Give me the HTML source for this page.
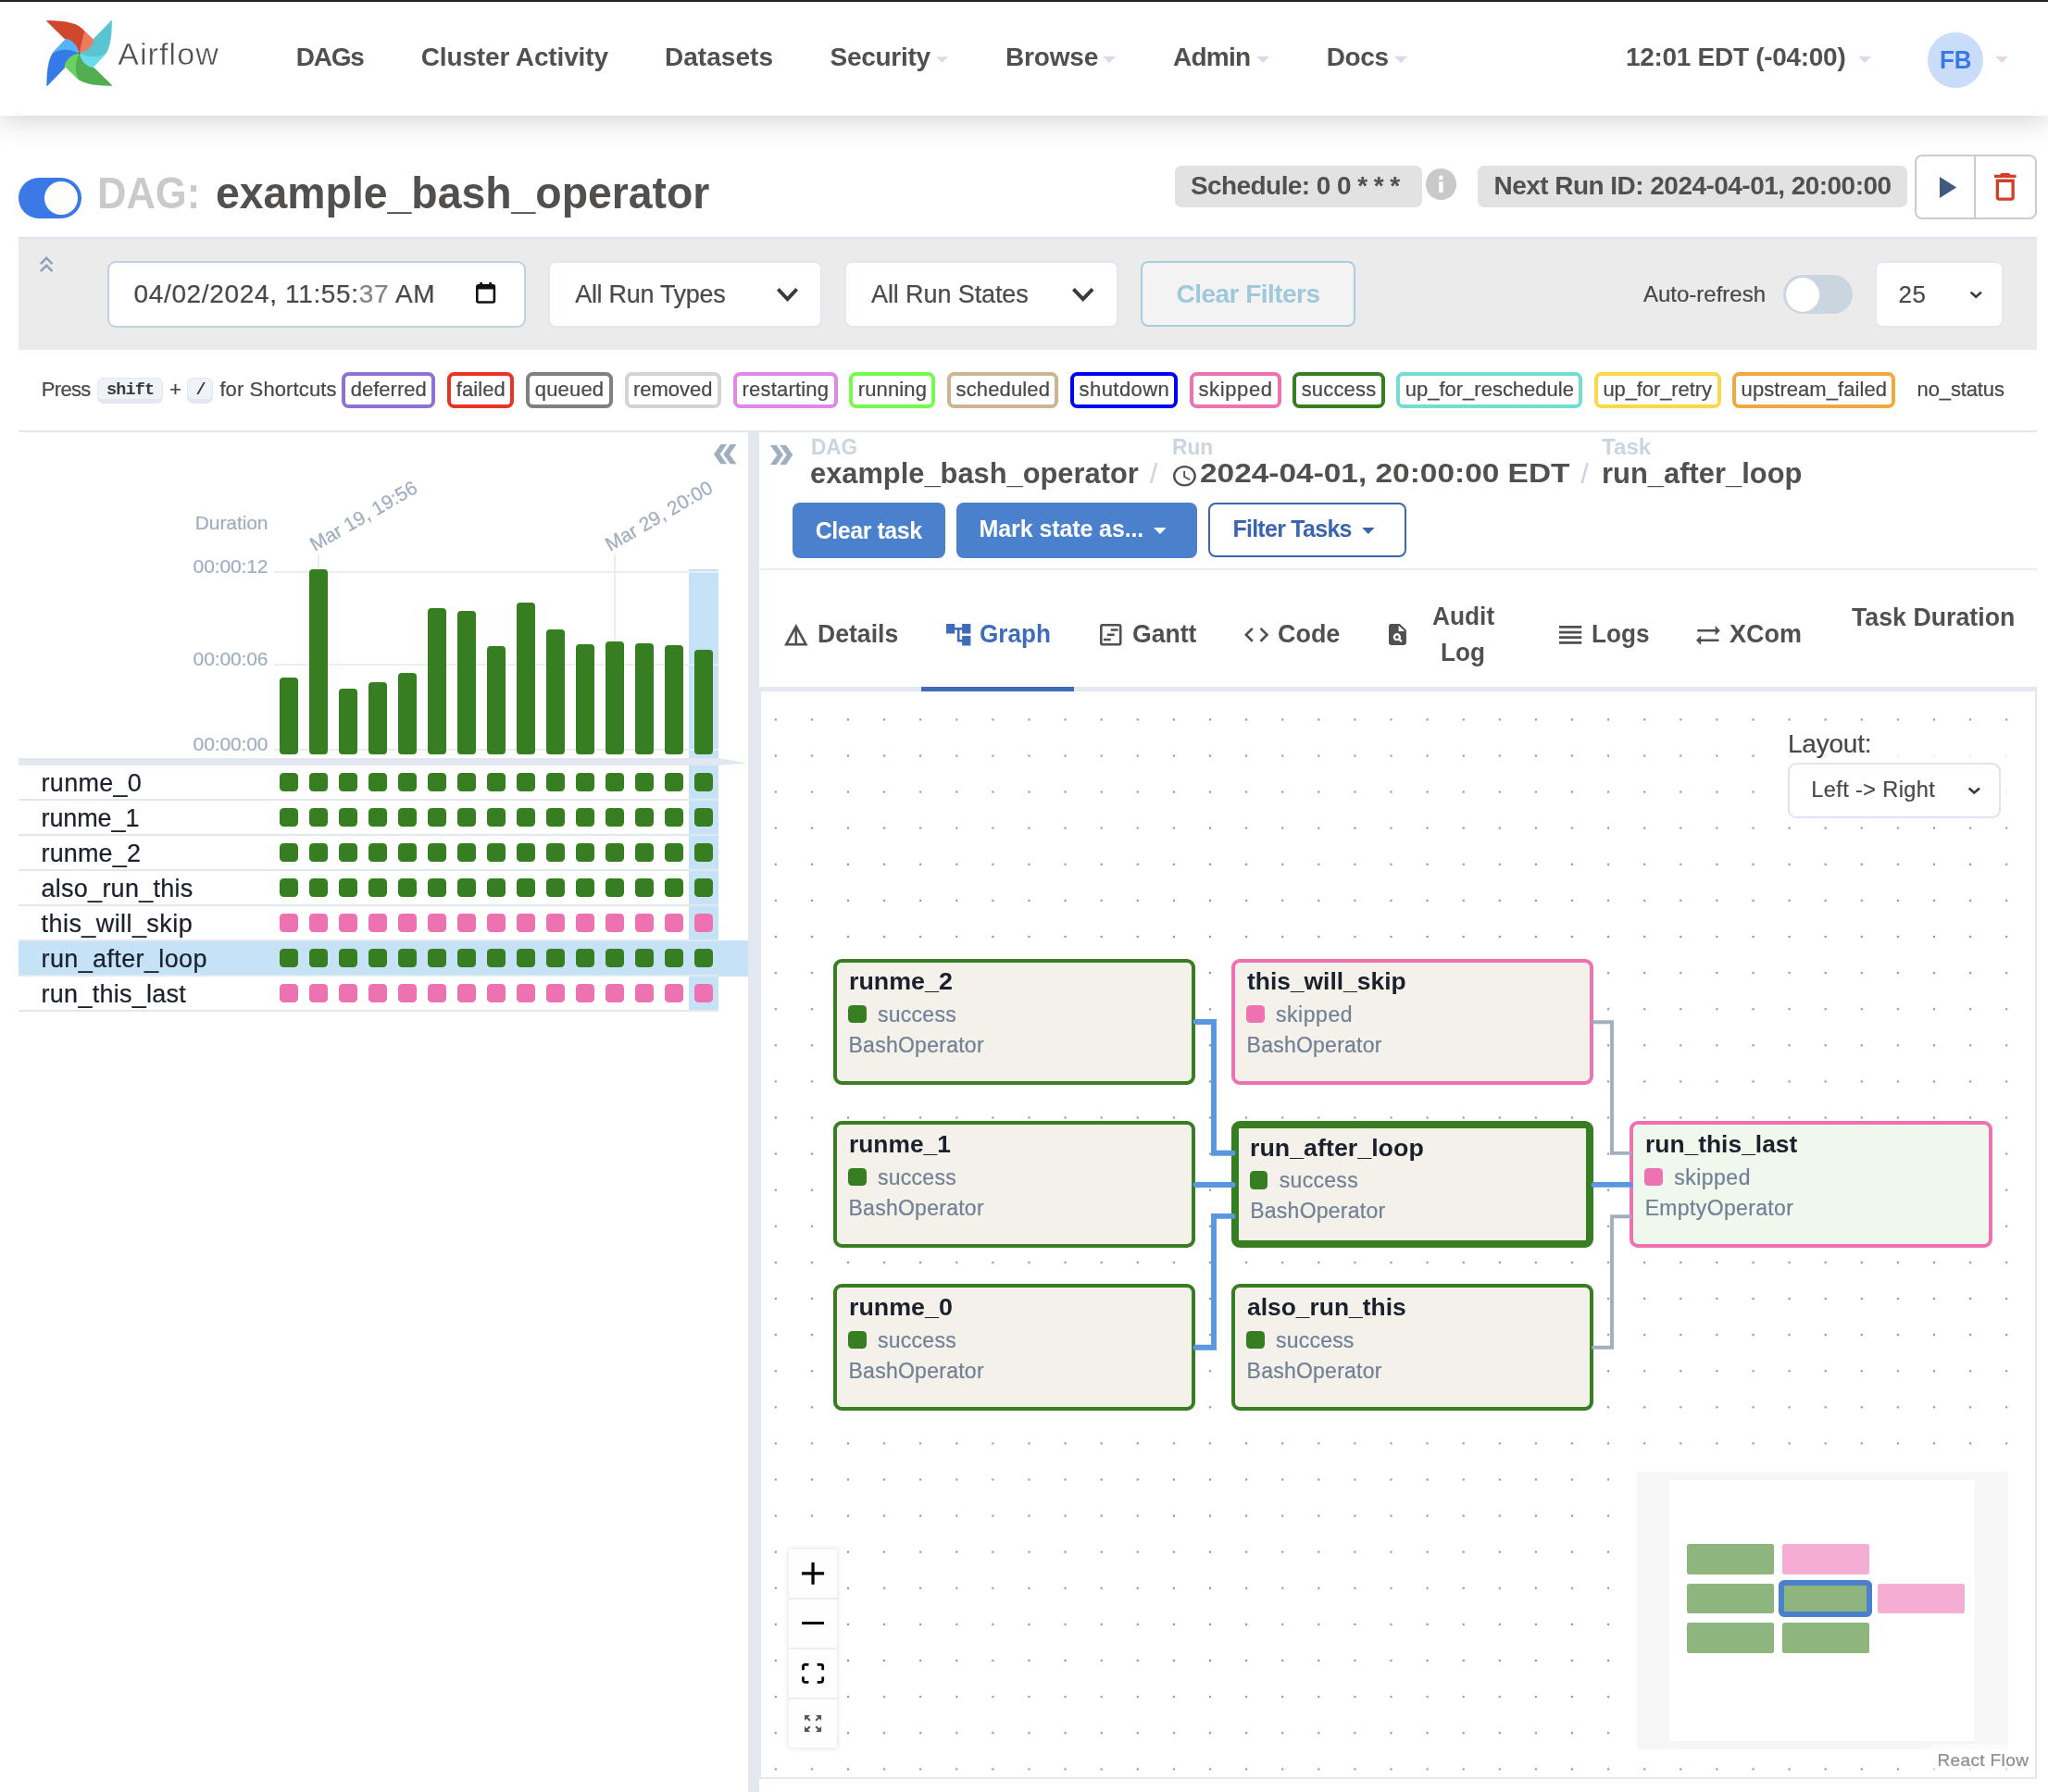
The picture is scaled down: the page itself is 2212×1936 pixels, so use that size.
<!DOCTYPE html>
<html lang="en"><head><meta charset="utf-8"><title>Airflow - example_bash_operator</title>
<style>
*{box-sizing:border-box;margin:0;padding:0}
html,body{width:2212px;height:1936px;overflow:hidden;background:#fff}
body{position:relative;font-family:"Liberation Sans",sans-serif}
#root{position:absolute;left:0;top:0;width:2212px;height:1936px;will-change:transform}
.t{position:absolute;white-space:pre;display:block}
.r{-webkit-text-stroke:0.22px currentColor}
.a{position:absolute;display:block}
svg{position:absolute;display:block;overflow:visible}

.sq{width:470px;height:20px}
.sq i{position:absolute;top:0;width:20px;height:20px;border-radius:4.5px;background:currentColor}
</style></head>
<body>
<div id="root">
<div class="a" style="left:0px;top:2px;width:2212.00px;height:122.50px;background:#fff;box-shadow:0 2px 32px rgba(0,0,0,.21)"></div>
<div class="a" style="left:0px;top:0px;width:2212.00px;height:2.20px;background:#20242b"></div>
<svg style="left:50px;top:22px" width="71.3" height="71" viewBox="0 0 130.2 130.2"><defs><clipPath id="bl"><path d="M1.76,129.58 A0.67,0.67 0 0 1 0.6,129.05 C0.95,103.62 2.85,73.65 16.13,60.05 L39.21,36.39 A1.06,1.06 0 0 1 39.84,36.07 C52,38 63,52 65.1,65.1 C52,67.2 38,78.2 36.5,90.7 L36.5,94 Z"/></clipPath></defs><g transform="rotate(0 65.1 65.1)"><path d="M1.76,129.58 A0.67,0.67 0 0 1 0.6,129.05 C0.95,103.62 2.85,73.65 16.13,60.05 L39.21,36.39 A1.06,1.06 0 0 1 39.84,36.07 C52,38 63,52 65.1,65.1 C52,67.2 38,78.2 36.5,90.7 L36.5,94 Z" fill="#367ae7" stroke="#367ae7" stroke-width="0.5"/><path d="M65.1,65.1 C48,57 28,54 11.5,66.1 L-2,50 L39.5,28 L72,30 Z" fill="#55b4fa" clip-path="url(#bl)"/></g><g transform="rotate(90 65.1 65.1)"><path d="M1.76,129.58 A0.67,0.67 0 0 1 0.6,129.05 C0.95,103.62 2.85,73.65 16.13,60.05 L39.21,36.39 A1.06,1.06 0 0 1 39.84,36.07 C52,38 63,52 65.1,65.1 C52,67.2 38,78.2 36.5,90.7 L36.5,94 Z" fill="#cf472d" stroke="#cf472d" stroke-width="0.5"/><path d="M65.1,65.1 C56,62 38,60 21.5,54.5 L10,42 L39.5,28 L72,30 Z" fill="#ed7c5e" clip-path="url(#bl)"/></g><g transform="rotate(180 65.1 65.1)"><path d="M1.76,129.58 A0.67,0.67 0 0 1 0.6,129.05 C0.95,103.62 2.85,73.65 16.13,60.05 L39.21,36.39 A1.06,1.06 0 0 1 39.84,36.07 C52,38 63,52 65.1,65.1 C52,67.2 38,78.2 36.5,90.7 L36.5,94 Z" fill="#5bc4d1" stroke="#5bc4d1" stroke-width="0.5"/><path d="M65.1,65.1 C48,57 28,54 11.5,66.1 L-2,50 L39.5,28 L72,30 Z" fill="#68ddec" clip-path="url(#bl)"/></g><g transform="rotate(270 65.1 65.1)"><path d="M1.76,129.58 A0.67,0.67 0 0 1 0.6,129.05 C0.95,103.62 2.85,73.65 16.13,60.05 L39.21,36.39 A1.06,1.06 0 0 1 39.84,36.07 C52,38 63,52 65.1,65.1 C52,67.2 38,78.2 36.5,90.7 L36.5,94 Z" fill="#51ac52" stroke="#51ac52" stroke-width="0.5"/><path d="M65.1,65.1 C48,57 28,54 11.5,66.1 L-2,50 L39.5,28 L72,30 Z" fill="#68d363" clip-path="url(#bl)"/></g><circle cx="65.3" cy="65.3" r="1.7" fill="#4a3c44"/></svg>
<span class="t" style="left:127.20px;top:41.02px;font:400 34px/34px 'Liberation Sans',sans-serif;letter-spacing:1.092px;color:#51504f;-webkit-text-stroke:0.45px #fff;">Airflow</span>
<span class="t" style="left:319.80px;top:48.40px;font:700 28px/28px 'Liberation Sans',sans-serif;letter-spacing:-1.250px;color:#51504f;">DAGs</span>
<span class="t" style="left:454.70px;top:48.40px;font:700 28px/28px 'Liberation Sans',sans-serif;letter-spacing:-0.138px;color:#51504f;">Cluster Activity</span>
<span class="t" style="left:718.00px;top:48.40px;font:700 28px/28px 'Liberation Sans',sans-serif;letter-spacing:0.036px;color:#51504f;">Datasets</span>
<span class="t" style="left:896.50px;top:48.40px;font:700 28px/28px 'Liberation Sans',sans-serif;letter-spacing:-0.286px;color:#51504f;">Security</span>
<svg style="left:1011px;top:61.3px" width="13.0" height="7.0" viewBox="0 0 10 5"><path d="M0 0H10L5 5Z" fill="#e3d6e8"/></svg>
<span class="t" style="left:1086.00px;top:48.40px;font:700 28px/28px 'Liberation Sans',sans-serif;letter-spacing:-0.165px;color:#51504f;">Browse</span>
<svg style="left:1191.4px;top:61.3px" width="14.1" height="7.0" viewBox="0 0 10 5"><path d="M0 0H10L5 5Z" fill="#e3d6e8"/></svg>
<span class="t" style="left:1267.00px;top:48.40px;font:700 28px/28px 'Liberation Sans',sans-serif;letter-spacing:-0.781px;color:#51504f;">Admin</span>
<svg style="left:1356.8px;top:61.3px" width="14.2" height="7.0" viewBox="0 0 10 5"><path d="M0 0H10L5 5Z" fill="#e3d6e8"/></svg>
<span class="t" style="left:1432.70px;top:48.40px;font:700 28px/28px 'Liberation Sans',sans-serif;letter-spacing:-0.400px;color:#51504f;">Docs</span>
<svg style="left:1505.8px;top:61.3px" width="14.2" height="7.0" viewBox="0 0 10 5"><path d="M0 0H10L5 5Z" fill="#e3d6e8"/></svg>
<span class="t" style="left:1756.00px;top:48.40px;font:700 28px/28px 'Liberation Sans',sans-serif;letter-spacing:-0.297px;color:#51504f;">12:01 EDT (-04:00)</span>
<svg style="left:2006.5px;top:61.3px" width="14.2" height="7.0" viewBox="0 0 10 5"><path d="M0 0H10L5 5Z" fill="#e3d6e8"/></svg>
<div class="a" style="left:2081.5px;top:34.6px;width:60.30px;height:60.40px;border-radius:50%;background:#c9dcfa"></div>
<span class="t" style="left:2094.80px;top:50.90px;font:700 28px/28px 'Liberation Sans',sans-serif;letter-spacing:0.000px;color:#3b78e6;transform-origin:0 0;transform:scaleX(0.9258);">FB</span>
<svg style="left:2154.6px;top:61.3px" width="14.2" height="7.0" viewBox="0 0 10 5"><path d="M0 0H10L5 5Z" fill="#e3d6e8"/></svg>
<div class="a" style="left:20.3px;top:192px;width:67.70px;height:43.70px;border-radius:22px;background:#3a79e6"></div>
<div class="a" style="left:47.7px;top:195.8px;width:36.30px;height:36.20px;border-radius:50%;background:#fffdfb"></div>
<span class="t" style="left:104.60px;top:184.97px;font:700 48px/48px 'Liberation Sans',sans-serif;letter-spacing:0.000px;color:#cacaca;transform-origin:0 0;transform:scaleX(0.9060);">DAG:</span>
<span class="t" style="left:233.00px;top:184.97px;font:700 48px/48px 'Liberation Sans',sans-serif;letter-spacing:0.000px;color:#51504f;transform-origin:0 0;transform:scaleX(0.9659);">example_bash_operator</span>
<div class="a" style="left:1269px;top:179.4px;width:266.70px;height:44.20px;border-radius:7px;background:#e2e2e2"></div>
<span class="t" style="left:1286.00px;top:186.60px;font:700 28px/28px 'Liberation Sans',sans-serif;letter-spacing:-0.583px;color:#51504f;">Schedule: 0 0 * * *</span>
<div class="a" style="left:1539.6px;top:182.2px;width:33.40px;height:33.40px;border-radius:50%;background:#c9c9c9"></div>
<svg style="left:1540px;top:182.7px" width="32.7" height="32.7" viewBox="0 0 32.7 32.7"><circle cx="16.35" cy="9" r="2.4" fill="#fff"/><rect x="14.2" y="13.4" width="4.4" height="11.6" fill="#fff"/></svg>
<div class="a" style="left:1596px;top:179.4px;width:463.70px;height:44.20px;border-radius:7px;background:#e2e2e2"></div>
<span class="t" style="left:1613.50px;top:186.60px;font:700 28px/28px 'Liberation Sans',sans-serif;letter-spacing:-0.535px;color:#51504f;">Next Run ID: 2024-04-01, 20:00:00</span>
<div class="a" style="left:2068.2px;top:167.2px;width:131.50px;height:70.20px;border-radius:8px;border:2px solid #cccccc;background:#fff"></div>
<div class="a" style="left:2131.7px;top:167.2px;width:2.00px;height:70.20px;background:#cccccc"></div>
<svg style="left:2095px;top:190.5px" width="18.20" height="22.90" viewBox="8 5 11 14" preserveAspectRatio="none"><path d="M8 5v14l11-7z" fill="#3d5a80"/></svg>
<svg style="left:2154px;top:186.6px" width="23.50" height="29.80" viewBox="5 3 14 18" preserveAspectRatio="none"><path d="M6 19c0 1.1.9 2 2 2h8c1.1 0 2-.9 2-2V7H6v12zM8 9h8v10H8V9zm7.5-5-1-1h-5l-1 1H5v2h14V4h-3.5z" fill="#cf4128"/></svg>
<div class="a" style="left:20px;top:256.3px;width:2180.00px;height:121.30px;background:#ebebeb;border-top:2px solid #dde4ee"></div>
<svg style="left:42.6px;top:277px" width="14.40" height="17.00" viewBox="6 5 12 14" preserveAspectRatio="none"><path d="M6 17.59 7.41 19 12 14.42 16.59 19 18 17.59l-6-6z m0 -6.59 1.41 1.41L12 7.83l4.59 4.58L18 11l-6-6z" fill="#8e9fba"/></svg>
<div class="a" style="left:116.3px;top:282.2px;width:451.50px;height:71.40px;border-radius:9px;border:2px solid #c4d0e0;background:#fff"></div>
<span class="t r" style="left:144.50px;top:304.10px;font:400 28px/28px 'Liberation Sans',sans-serif;letter-spacing:0.651px;color:#484848;">04/02/2024, 11:55:<span style="color:#858585">37</span> AM</span>
<svg style="left:513.8px;top:305px" width="21.2" height="22.8" viewBox="0 0 21.2 22.8"><rect x="1.3" y="3.3" width="18.6" height="18.2" rx="1.5" fill="none" stroke="#111" stroke-width="2.6"/><rect x="1.3" y="3.3" width="18.6" height="4.2" fill="#111"/><rect x="4.3" y="0" width="2.6" height="4" fill="#111"/><rect x="14.3" y="0" width="2.6" height="4" fill="#111"/></svg>
<div class="a" style="left:592px;top:282.2px;width:296.20px;height:71.40px;border-radius:8px;border:2px solid #e2e8f0;background:#fff"></div>
<span class="t r" style="left:621.20px;top:304.94px;font:400 27px/27px 'Liberation Sans',sans-serif;letter-spacing:-0.294px;color:#4a4a49;">All Run Types</span>
<svg style="left:838.6px;top:311px" width="23.00" height="15.00" viewBox="6 8.59 12 7.41" preserveAspectRatio="none"><path d="M16.59 8.59L12 13.17 7.41 8.59 6 10l6 6 6-6z" fill="#3a3a3a"/></svg>
<div class="a" style="left:911.8px;top:282.2px;width:296.40px;height:71.40px;border-radius:8px;border:2px solid #e2e8f0;background:#fff"></div>
<span class="t r" style="left:941.00px;top:304.94px;font:400 27px/27px 'Liberation Sans',sans-serif;letter-spacing:-0.102px;color:#4a4a49;">All Run States</span>
<svg style="left:1158px;top:311px" width="23.50" height="15.00" viewBox="6 8.59 12 7.41" preserveAspectRatio="none"><path d="M16.59 8.59L12 13.17 7.41 8.59 6 10l6 6 6-6z" fill="#3a3a3a"/></svg>
<div class="a" style="left:1232.4px;top:282.2px;width:231.40px;height:71.20px;border-radius:8px;border:2px solid #a9cddc;background:#f3f3f3"></div>
<span class="t" style="left:1270.50px;top:304.10px;font:700 28px/28px 'Liberation Sans',sans-serif;letter-spacing:-0.531px;color:#9fc9db;">Clear Filters</span>
<span class="t r" style="left:1775.00px;top:305.93px;font:400 24px/24px 'Liberation Sans',sans-serif;letter-spacing:0.000px;color:#484848;">Auto-refresh</span>
<div class="a" style="left:1926.3px;top:297px;width:74.50px;height:42.00px;border-radius:21px;background:#cbd5e0"></div>
<div class="a" style="left:1928.8px;top:299.5px;width:36.20px;height:37.00px;border-radius:50%;background:#fff"></div>
<div class="a" style="left:2025.2px;top:282.2px;width:139.00px;height:71.40px;border-radius:8px;border:2px solid #e2e8f0;background:#fff"></div>
<span class="t r" style="left:2050.50px;top:304.89px;font:400 26px/26px 'Liberation Sans',sans-serif;letter-spacing:0.625px;color:#484848;">25</span>
<svg style="left:2126.8px;top:313.8px" width="14.5" height="8.7" viewBox="0 0 14.5 8.7"><path d="M1.6 1.6L7.2 6.7L12.9 1.6" fill="none" stroke="#3a3a3a" stroke-width="2.6"/></svg>
<span class="t r" style="left:44.80px;top:410.48px;font:400 22px/22px 'Liberation Sans',sans-serif;letter-spacing:-0.688px;color:#484848;">Press</span>
<div class="a" style="left:105px;top:407.8px;width:70.80px;height:28.40px;border-radius:7px;background:#eff2f7;border:1.5px solid #e2e7f0;border-bottom-width:5px"></div>
<span class="t" style="left:115.00px;top:412.54px;font:700 18.5px/18.5px 'Liberation Mono',monospace;letter-spacing:-0.875px;color:#3a3a3a;">shift</span>
<span class="t r" style="left:183.00px;top:410.48px;font:400 22px/22px 'Liberation Sans',sans-serif;letter-spacing:0.000px;color:#484848;">+</span>
<div class="a" style="left:202.3px;top:407.8px;width:27.90px;height:28.40px;border-radius:7px;background:#eff2f7;border:1.5px solid #e2e7f0;border-bottom-width:5px"></div>
<span class="t" style="left:211.50px;top:412.54px;font:700 18.5px/18.5px 'Liberation Mono',monospace;letter-spacing:0.000px;color:#3a3a3a;">/</span>
<span class="t r" style="left:237.40px;top:410.48px;font:400 22px/22px 'Liberation Sans',sans-serif;letter-spacing:0.112px;color:#484848;">for Shortcuts</span>
<div class="a" style="left:369.3px;top:401.8px;width:101.10px;height:39.20px;border-radius:7.5px;border:4px solid #8e71d4;background:#fff"></div>
<span class="t r" style="left:378.70px;top:410.48px;font:400 22px/22px 'Liberation Sans',sans-serif;letter-spacing:0.014px;color:#484848;">deferred</span>
<div class="a" style="left:483.4px;top:401.8px;width:72.00px;height:39.20px;border-radius:7.5px;border:4px solid #ea3323;background:#fff"></div>
<span class="t r" style="left:492.80px;top:410.48px;font:400 22px/22px 'Liberation Sans',sans-serif;letter-spacing:0.075px;color:#484848;">failed</span>
<div class="a" style="left:568.4px;top:401.8px;width:93.20px;height:39.20px;border-radius:7.5px;border:4px solid #808080;background:#fff"></div>
<span class="t r" style="left:577.80px;top:410.48px;font:400 22px/22px 'Liberation Sans',sans-serif;letter-spacing:0.165px;color:#484848;">queued</span>
<div class="a" style="left:674.5px;top:401.8px;width:104.70px;height:39.20px;border-radius:7.5px;border:4px solid #d3d3d3;background:#fff"></div>
<span class="t r" style="left:683.90px;top:410.48px;font:400 22px/22px 'Liberation Sans',sans-serif;letter-spacing:0.013px;color:#484848;">removed</span>
<div class="a" style="left:792.2px;top:401.8px;width:112.40px;height:39.20px;border-radius:7.5px;border:4px solid #e087e8;background:#fff"></div>
<span class="t r" style="left:801.60px;top:410.48px;font:400 22px/22px 'Liberation Sans',sans-serif;letter-spacing:0.183px;color:#484848;">restarting</span>
<div class="a" style="left:917.3px;top:401.8px;width:93.20px;height:39.20px;border-radius:7.5px;border:4px solid #75fb4c;background:#fff"></div>
<span class="t r" style="left:926.70px;top:410.48px;font:400 22px/22px 'Liberation Sans',sans-serif;letter-spacing:0.138px;color:#484848;">running</span>
<div class="a" style="left:1023.1px;top:401.8px;width:120.40px;height:39.20px;border-radius:7.5px;border:4px solid #cdb591;background:#fff"></div>
<span class="t r" style="left:1032.50px;top:410.48px;font:400 22px/22px 'Liberation Sans',sans-serif;letter-spacing:0.144px;color:#484848;">scheduled</span>
<div class="a" style="left:1156.1px;top:401.8px;width:116.30px;height:39.20px;border-radius:7.5px;border:4px solid #0000f5;background:#fff"></div>
<span class="t r" style="left:1165.50px;top:410.48px;font:400 22px/22px 'Liberation Sans',sans-serif;letter-spacing:0.454px;color:#484848;">shutdown</span>
<div class="a" style="left:1285.1px;top:401.8px;width:98.60px;height:39.20px;border-radius:7.5px;border:4px solid #ed72b2;background:#fff"></div>
<span class="t r" style="left:1294.50px;top:410.48px;font:400 22px/22px 'Liberation Sans',sans-serif;letter-spacing:0.621px;color:#484848;">skipped</span>
<div class="a" style="left:1396.3px;top:401.8px;width:99.50px;height:39.20px;border-radius:7.5px;border:4px solid #377e22;background:#fff"></div>
<span class="t r" style="left:1405.70px;top:410.48px;font:400 22px/22px 'Liberation Sans',sans-serif;letter-spacing:0.167px;color:#484848;">success</span>
<div class="a" style="left:1508.4px;top:401.8px;width:201.10px;height:39.20px;border-radius:7.5px;border:4px solid #74ddd0;background:#fff"></div>
<span class="t r" style="left:1517.80px;top:410.48px;font:400 22px/22px 'Liberation Sans',sans-serif;letter-spacing:-0.009px;color:#484848;">up_for_reschedule</span>
<div class="a" style="left:1722px;top:401.8px;width:136.60px;height:39.20px;border-radius:7.5px;border:4px solid #f9d849;background:#fff"></div>
<span class="t r" style="left:1731.40px;top:410.48px;font:400 22px/22px 'Liberation Sans',sans-serif;letter-spacing:-0.093px;color:#484848;">up_for_retry</span>
<div class="a" style="left:1871.2px;top:401.8px;width:176.30px;height:39.20px;border-radius:7.5px;border:4px solid #f2a93b;background:#fff"></div>
<span class="t r" style="left:1880.60px;top:410.48px;font:400 22px/22px 'Liberation Sans',sans-serif;letter-spacing:0.057px;color:#484848;">upstream_failed</span>
<span class="t r" style="left:2070.60px;top:410.48px;font:400 22px/22px 'Liberation Sans',sans-serif;letter-spacing:-0.134px;color:#484848;">no_status</span>
<div class="a" style="left:20px;top:464.6px;width:2180.00px;height:2.20px;background:#e2e8f0"></div>
<div class="a" style="left:808.3px;top:466px;width:11.50px;height:1470.00px;background:#e3e7f0"></div>
<svg style="left:771.3px;top:480.3px" width="24.40" height="21.30" viewBox="4 5 16.5 14" preserveAspectRatio="none"><path d="M15.5 5H11l5 7-5 7h4.5l5-7z M8.5 5H4l5 7-5 7h4.5l5-7z" fill="#a0aec0" transform="translate(24.5 0) scale(-1 1)"/></svg>
<div class="a" style="left:744.2px;top:614.9px;width:31.80px;height:477.50px;background:#c5e2f6"></div>
<div class="a" style="left:20.3px;top:1016.4px;width:788.00px;height:38.20px;background:#c5e2f6"></div>
<div class="a" style="left:296px;top:617px;width:480.00px;height:2.00px;background:#e9edf4"></div>
<div class="a" style="left:296px;top:716.6px;width:480.00px;height:2.00px;background:#e9edf4"></div>
<div class="a" style="left:296px;top:809px;width:480.00px;height:2.00px;background:#e9edf4"></div>
<div class="a" style="left:343px;top:599px;width:2.00px;height:211.00px;background:#e9edf4"></div>
<div class="a" style="left:663px;top:599px;width:2.00px;height:211.00px;background:#e9edf4"></div>
<span class="t r" style="left:210.80px;top:554.02px;font:400 21px/21px 'Liberation Sans',sans-serif;letter-spacing:-0.096px;color:#a0aec0;">Duration</span>
<span class="t r" style="left:208.60px;top:601.32px;font:400 21px/21px 'Liberation Sans',sans-serif;letter-spacing:-0.121px;color:#a0aec0;">00:00:12</span>
<span class="t r" style="left:208.60px;top:701.22px;font:400 21px/21px 'Liberation Sans',sans-serif;letter-spacing:-0.121px;color:#a0aec0;">00:00:06</span>
<span class="t r" style="left:208.60px;top:793.32px;font:400 21px/21px 'Liberation Sans',sans-serif;letter-spacing:-0.121px;color:#a0aec0;">00:00:00</span>
<span class="t r" style="left:339.6px;top:577.6px;font:400 21px/21px 'Liberation Sans',sans-serif;color:#a0aec0;transform-origin:0 17.8px;transform:rotate(-30deg)">Mar 19, 19:56</span>
<span class="t r" style="left:658.6px;top:577.6px;font:400 21px/21px 'Liberation Sans',sans-serif;color:#a0aec0;transform-origin:0 17.8px;transform:rotate(-30deg)">Mar 29, 20:00</span>
<div class="a" style="left:302px;top:732.3px;width:20.00px;height:82.60px;background:#377e22;border-radius:4px"></div>
<div class="a" style="left:334px;top:614.9px;width:20.00px;height:200.00px;background:#377e22;border-radius:4px"></div>
<div class="a" style="left:366px;top:744.1px;width:20.00px;height:70.80px;background:#377e22;border-radius:4px"></div>
<div class="a" style="left:398px;top:737.1px;width:20.00px;height:77.80px;background:#377e22;border-radius:4px"></div>
<div class="a" style="left:430px;top:726.9px;width:20.00px;height:88.00px;background:#377e22;border-radius:4px"></div>
<div class="a" style="left:462px;top:657.1px;width:20.00px;height:157.80px;background:#377e22;border-radius:4px"></div>
<div class="a" style="left:494px;top:660px;width:20.00px;height:154.90px;background:#377e22;border-radius:4px"></div>
<div class="a" style="left:526px;top:698px;width:20.00px;height:116.90px;background:#377e22;border-radius:4px"></div>
<div class="a" style="left:558px;top:651.1px;width:20.00px;height:163.80px;background:#377e22;border-radius:4px"></div>
<div class="a" style="left:590px;top:680px;width:20.00px;height:134.90px;background:#377e22;border-radius:4px"></div>
<div class="a" style="left:622px;top:696.1px;width:20.00px;height:118.80px;background:#377e22;border-radius:4px"></div>
<div class="a" style="left:654px;top:693px;width:20.00px;height:121.90px;background:#377e22;border-radius:4px"></div>
<div class="a" style="left:686px;top:694.9px;width:20.00px;height:120.00px;background:#377e22;border-radius:4px"></div>
<div class="a" style="left:718px;top:697.1px;width:20.00px;height:117.80px;background:#377e22;border-radius:4px"></div>
<div class="a" style="left:750px;top:702.2px;width:20.00px;height:112.70px;background:#377e22;border-radius:4px"></div>
<svg style="left:20px;top:819px" width="790" height="8" viewBox="0 0 790 8"><path d="M0 0H756L787 5.4L756 8H0Z" fill="#e2e7f0"/></svg>
<span class="t r" style="left:44.60px;top:832.64px;font:400 27px/27px 'Liberation Sans',sans-serif;letter-spacing:0.263px;color:#1a202c;">runme_0</span>
<div class="a sq" style="left:302px;top:835.1px;color:#377e22"><i style="left:0px"></i><i style="left:32px"></i><i style="left:64px"></i><i style="left:96px"></i><i style="left:128px"></i><i style="left:160px"></i><i style="left:192px"></i><i style="left:224px"></i><i style="left:256px"></i><i style="left:288px"></i><i style="left:320px"></i><i style="left:352px"></i><i style="left:384px"></i><i style="left:416px"></i><i style="left:448px"></i></div>
<div class="a" style="left:20.3px;top:863.0px;width:755.70px;height:2.00px;background:#e2e7f0"></div>
<span class="t r" style="left:44.60px;top:870.64px;font:400 27px/27px 'Liberation Sans',sans-serif;letter-spacing:-0.121px;color:#1a202c;">runme_1</span>
<div class="a sq" style="left:302px;top:873.1px;color:#377e22"><i style="left:0px"></i><i style="left:32px"></i><i style="left:64px"></i><i style="left:96px"></i><i style="left:128px"></i><i style="left:160px"></i><i style="left:192px"></i><i style="left:224px"></i><i style="left:256px"></i><i style="left:288px"></i><i style="left:320px"></i><i style="left:352px"></i><i style="left:384px"></i><i style="left:416px"></i><i style="left:448px"></i></div>
<div class="a" style="left:20.3px;top:901.0px;width:755.70px;height:2.00px;background:#e2e7f0"></div>
<span class="t r" style="left:44.60px;top:908.64px;font:400 27px/27px 'Liberation Sans',sans-serif;letter-spacing:0.129px;color:#1a202c;">runme_2</span>
<div class="a sq" style="left:302px;top:911.1px;color:#377e22"><i style="left:0px"></i><i style="left:32px"></i><i style="left:64px"></i><i style="left:96px"></i><i style="left:128px"></i><i style="left:160px"></i><i style="left:192px"></i><i style="left:224px"></i><i style="left:256px"></i><i style="left:288px"></i><i style="left:320px"></i><i style="left:352px"></i><i style="left:384px"></i><i style="left:416px"></i><i style="left:448px"></i></div>
<div class="a" style="left:20.3px;top:939.0px;width:755.70px;height:2.00px;background:#e2e7f0"></div>
<span class="t r" style="left:44.60px;top:946.64px;font:400 27px/27px 'Liberation Sans',sans-serif;letter-spacing:0.248px;color:#1a202c;">also_run_this</span>
<div class="a sq" style="left:302px;top:949.1px;color:#377e22"><i style="left:0px"></i><i style="left:32px"></i><i style="left:64px"></i><i style="left:96px"></i><i style="left:128px"></i><i style="left:160px"></i><i style="left:192px"></i><i style="left:224px"></i><i style="left:256px"></i><i style="left:288px"></i><i style="left:320px"></i><i style="left:352px"></i><i style="left:384px"></i><i style="left:416px"></i><i style="left:448px"></i></div>
<div class="a" style="left:20.3px;top:977.0px;width:755.70px;height:2.00px;background:#e2e7f0"></div>
<span class="t r" style="left:44.60px;top:984.64px;font:400 27px/27px 'Liberation Sans',sans-serif;letter-spacing:0.423px;color:#1a202c;">this_will_skip</span>
<div class="a sq" style="left:302px;top:987.1px;color:#ed72b2"><i style="left:0px"></i><i style="left:32px"></i><i style="left:64px"></i><i style="left:96px"></i><i style="left:128px"></i><i style="left:160px"></i><i style="left:192px"></i><i style="left:224px"></i><i style="left:256px"></i><i style="left:288px"></i><i style="left:320px"></i><i style="left:352px"></i><i style="left:384px"></i><i style="left:416px"></i><i style="left:448px"></i></div>
<div class="a" style="left:20.3px;top:1015.0px;width:755.70px;height:2.00px;background:#e2e7f0"></div>
<span class="t r" style="left:44.60px;top:1022.64px;font:400 27px/27px 'Liberation Sans',sans-serif;letter-spacing:0.360px;color:#1a202c;">run_after_loop</span>
<div class="a sq" style="left:302px;top:1025.1px;color:#377e22"><i style="left:0px"></i><i style="left:32px"></i><i style="left:64px"></i><i style="left:96px"></i><i style="left:128px"></i><i style="left:160px"></i><i style="left:192px"></i><i style="left:224px"></i><i style="left:256px"></i><i style="left:288px"></i><i style="left:320px"></i><i style="left:352px"></i><i style="left:384px"></i><i style="left:416px"></i><i style="left:448px"></i></div>
<div class="a" style="left:20.3px;top:1053.0px;width:755.70px;height:2.00px;background:#e2e7f0"></div>
<span class="t r" style="left:44.60px;top:1060.64px;font:400 27px/27px 'Liberation Sans',sans-serif;letter-spacing:0.256px;color:#1a202c;">run_this_last</span>
<div class="a sq" style="left:302px;top:1063.1px;color:#ed72b2"><i style="left:0px"></i><i style="left:32px"></i><i style="left:64px"></i><i style="left:96px"></i><i style="left:128px"></i><i style="left:160px"></i><i style="left:192px"></i><i style="left:224px"></i><i style="left:256px"></i><i style="left:288px"></i><i style="left:320px"></i><i style="left:352px"></i><i style="left:384px"></i><i style="left:416px"></i><i style="left:448px"></i></div>
<div class="a" style="left:20.3px;top:1091.0px;width:755.70px;height:2.00px;background:#e2e7f0"></div>
<svg style="left:832.3px;top:480.5px" width="24.30" height="21.10" viewBox="4 5 16.5 14" preserveAspectRatio="none"><path d="M15.5 5H11l5 7-5 7h4.5l5-7z M8.5 5H4l5 7-5 7h4.5l5-7z" fill="#a0aec0"/></svg>
<span class="t" style="left:875.70px;top:472.13px;font:700 23px/23px 'Liberation Sans',sans-serif;letter-spacing:0.000px;color:#cbd5e0;transform-origin:0 0;transform:scaleX(0.9800);">DAG</span>
<span class="t" style="left:1265.70px;top:472.13px;font:700 23px/23px 'Liberation Sans',sans-serif;letter-spacing:0.000px;color:#cbd5e0;transform-origin:0 0;transform:scaleX(0.9899);">Run</span>
<span class="t" style="left:1730.40px;top:472.13px;font:700 23px/23px 'Liberation Sans',sans-serif;letter-spacing:0.000px;color:#cbd5e0;transform-origin:0 0;transform:scaleX(1.0502);">Task</span>
<span class="t" style="left:875.20px;top:495.56px;font:700 31px/31px 'Liberation Sans',sans-serif;letter-spacing:0.000px;color:#51504f;transform-origin:0 0;transform:scaleX(0.9946);">example_bash_operator</span>
<span class="t r" style="left:1242.00px;top:496.83px;font:400 29.5px/29.5px 'Liberation Sans',sans-serif;letter-spacing:0.000px;color:#cbd5e0;">/</span>
<svg style="left:1266.5px;top:503.4px" width="24.90" height="22.60" viewBox="2 2 20 20" preserveAspectRatio="none"><path d="M11.99 2C6.47 2 2 6.48 2 12s4.47 10 9.99 10C17.52 22 22 17.52 22 12S17.52 2 11.99 2zM12 20c-4.42 0-8-3.58-8-8s3.58-8 8-8 8 3.58 8 8-3.58 8-8 8z M12.5 7H11v6l5.25 3.15.75-1.23-4.5-2.67z" fill="#51504f"/></svg>
<span class="t" style="left:1295.60px;top:496.40px;font:700 30px/30px 'Liberation Sans',sans-serif;letter-spacing:0.000px;color:#51504f;transform-origin:0 0;transform:scaleX(1.1140);">2024-04-01, 20:00:00 EDT</span>
<span class="t r" style="left:1707.40px;top:496.83px;font:400 29.5px/29.5px 'Liberation Sans',sans-serif;letter-spacing:0.000px;color:#cbd5e0;">/</span>
<span class="t" style="left:1730.40px;top:495.56px;font:700 31px/31px 'Liberation Sans',sans-serif;letter-spacing:0.000px;color:#51504f;transform-origin:0 0;transform:scaleX(0.9972);">run_after_loop</span>
<div class="a" style="left:856px;top:542.9px;width:165.00px;height:59.80px;border-radius:8px;background:#4a80cc"></div>
<span class="t" style="left:880.70px;top:560.54px;font:700 25px/25px 'Liberation Sans',sans-serif;letter-spacing:-0.447px;color:#fff;">Clear task</span>
<div class="a" style="left:1033px;top:542.9px;width:260.00px;height:59.80px;border-radius:8px;background:#4a80cc"></div>
<span class="t" style="left:1057.60px;top:559.24px;font:700 25px/25px 'Liberation Sans',sans-serif;letter-spacing:-0.103px;color:#fff;">Mark state as...</span>
<svg style="left:1246.3px;top:570px" width="13.7" height="7.0" viewBox="0 0 10 5"><path d="M0 0H10L5 5Z" fill="#fff"/></svg>
<div class="a" style="left:1305.2px;top:543.4px;width:213.50px;height:59.10px;border-radius:8px;border:2px solid #3a66b1;background:#fff"></div>
<span class="t" style="left:1331.40px;top:559.24px;font:700 25px/25px 'Liberation Sans',sans-serif;letter-spacing:-0.730px;color:#3a66b1;">Filter Tasks</span>
<svg style="left:1470.6px;top:570px" width="13.7" height="7.0" viewBox="0 0 10 5"><path d="M0 0H10L5 5Z" fill="#3a66b1"/></svg>
<div class="a" style="left:820px;top:614.4px;width:1380.00px;height:2.00px;background:#e9edf4"></div>
<span class="t" style="left:883.20px;top:672.14px;font:700 27px/27px 'Liberation Sans',sans-serif;letter-spacing:0.000px;color:#51504f;transform-origin:0 0;transform:scaleX(0.9853);">Details</span>
<span class="t" style="left:1058.20px;top:672.14px;font:700 27px/27px 'Liberation Sans',sans-serif;letter-spacing:0.000px;color:#3e6cb8;transform-origin:0 0;transform:scaleX(0.9673);">Graph</span>
<span class="t" style="left:1223.30px;top:672.14px;font:700 27px/27px 'Liberation Sans',sans-serif;letter-spacing:0.000px;color:#51504f;transform-origin:0 0;transform:scaleX(0.9844);">Gantt</span>
<span class="t" style="left:1379.90px;top:672.14px;font:700 27px/27px 'Liberation Sans',sans-serif;letter-spacing:0.000px;color:#51504f;transform-origin:0 0;transform:scaleX(0.9970);">Code</span>
<span class="t" style="left:1546.80px;top:652.94px;font:700 27px/27px 'Liberation Sans',sans-serif;letter-spacing:0.000px;color:#51504f;transform-origin:0 0;transform:scaleX(0.9739);">Audit</span>
<span class="t" style="left:1556.10px;top:692.24px;font:700 27px/27px 'Liberation Sans',sans-serif;letter-spacing:0.000px;color:#51504f;transform-origin:0 0;transform:scaleX(0.9677);">Log</span>
<span class="t" style="left:1718.80px;top:672.14px;font:700 27px/27px 'Liberation Sans',sans-serif;letter-spacing:0.000px;color:#51504f;transform-origin:0 0;transform:scaleX(0.9690);">Logs</span>
<span class="t" style="left:1867.80px;top:672.14px;font:700 27px/27px 'Liberation Sans',sans-serif;letter-spacing:0.000px;color:#51504f;transform-origin:0 0;transform:scaleX(0.9987);">XCom</span>
<span class="t" style="left:2000.00px;top:653.94px;font:700 27px/27px 'Liberation Sans',sans-serif;letter-spacing:0.000px;color:#51504f;transform-origin:0 0;transform:scaleX(0.9904);">Task Duration</span>
<svg style="left:847.2px;top:674px" width="25.60" height="23.50" viewBox="2 3 20 18" preserveAspectRatio="none"><path d="M12 3 2 21h20L12 3zm1 5.92L18.6 19H13V8.92zm-2 0V19H5.4L11 8.92z" fill="#51504f"/></svg>
<svg style="left:1021.6px;top:674.3px" width="26.40" height="23.50" viewBox="2 3 20 18" preserveAspectRatio="none"><path d="M22 11V3h-7v3H9V3H2v8h7V8h2v10h4v3h7v-8h-7v3h-2V8h2v3z" fill="#3e6cb8"/></svg>
<svg style="left:1188.2px;top:674px" width="23.50" height="23.50" viewBox="3 3 18 18" preserveAspectRatio="none"><path d="M6 15h6v2H6zm6-8h6v2h-6zm-3 4h6v2H9z M19 3H5c-1.1 0-2 .9-2 2v14c0 1.1.9 2 2 2h14c1.1 0 2-.9 2-2V5c0-1.1-.9-2-2-2zm0 16H5V5h14v14z" fill="#51504f"/></svg>
<svg style="left:1344px;top:678.2px" width="26.30" height="15.70" viewBox="2 6 20 12" preserveAspectRatio="none"><path d="M9.4 16.6 4.8 12l4.6-4.6L8 6l-6 6 6 6 1.4-1.4zm5.2 0 4.6-4.6-4.6-4.6L16 6l6 6-6 6-1.4-1.4z" fill="#51504f"/></svg>
<svg style="left:1499.7px;top:674.3px" width="18.90" height="22.90" viewBox="4 2 16 20" preserveAspectRatio="none"><path d="M14 2H6c-1.1 0-2 .9-2 2v16c0 1.1.89 2 1.99 2H18c1.1 0 2-.9 2-2V8l-6-6zm1.04 17.45-1.88-1.88c-1.33.71-3.01.53-4.13-.59a3.495 3.495 0 0 1 0-4.95 3.495 3.495 0 0 1 4.95 0c1.12 1.12 1.31 2.8.59 4.13l1.88 1.88-1.41 1.41zM13 9V3.5L18.5 9H13z" fill="#51504f"/><circle cx="11.5" cy="14.5" r="1.5" fill="#51504f"/></svg>
<svg style="left:1683.7px;top:676.1px" width="24.30" height="19.70" viewBox="3 5 18 14" preserveAspectRatio="none"><path d="M3 15h18v-2H3v2zm0 4h18v-2H3v2zm0-8h18V9H3v2zm0-6v2h18V5H3z" fill="#51504f"/></svg>
<svg style="left:1832px;top:675.5px" width="25.80" height="21.00" viewBox="2 4 20 16" preserveAspectRatio="none"><path d="m18 12 4-4-4-4v3H3v2h15v3zM6 12l-4 4 4 4v-3h15v-2H6v-3z" fill="#51504f"/></svg>
<div class="a" style="left:820px;top:742.2px;width:1380.00px;height:4.80px;background:#e2e7f0"></div>
<div class="a" style="left:995px;top:742.2px;width:165.00px;height:4.40px;background:#3e6cb8"></div>
<div class="a" style="left:820px;top:747px;width:1379.8px;height:1175px;border:2px solid #e2e7f0;border-top:none;background:#fff"></div>
<svg style="left:822px;top:747px" width="1375.8" height="1173"><defs><pattern id="dots" x="-3.75" y="10.85" width="39.1" height="39.1" patternUnits="userSpaceOnUse"><circle cx="19.55" cy="19.55" r="1.25" fill="#94949c"/></pattern></defs><rect width="100%" height="100%" fill="url(#dots)"/></svg>
<div class="a" style="left:1929px;top:788px;width:249.00px;height:98.00px;background:rgba(255,255,255,.82)"></div>
<span class="t r" style="left:1931.00px;top:790.10px;font:400 28px/28px 'Liberation Sans',sans-serif;letter-spacing:-0.213px;color:#484848;">Layout:</span>
<div class="a" style="left:1930.5px;top:824.2px;width:230.80px;height:59.40px;border-radius:9px;border:2px solid #dde4ef;background:#fff"></div>
<span class="t r" style="left:1956.30px;top:842.01px;font:400 23.5px/23.5px 'Liberation Sans',sans-serif;letter-spacing:0.406px;color:#484848;">Left -&gt; Right</span>
<svg style="left:2124.7px;top:850.2px" width="14.6" height="8.6" viewBox="0 0 14.6 8.6"><path d="M1.6 1.6L7.3 6.6L13.0 1.6" fill="none" stroke="#3a3a3a" stroke-width="2.6"/></svg>
<div class="a" style="left:900.3px;top:1035.5px;width:391.10px;height:136.80px;border-radius:9px;border:4px solid #377e22;background:#f4f1ea"></div>
<span class="t" style="left:916.50px;top:1047.17px;font:700 26.5px/26.5px 'Liberation Sans',sans-serif;letter-spacing:0.000px;color:#1a202c;transform-origin:0 0;transform:scaleX(1.0127);">runme_2</span>
<div class="a" style="left:915.9px;top:1085.8px;width:19.80px;height:19.40px;border-radius:4.5px;background:#377e22"></div>
<span class="t r" style="left:948.00px;top:1084.73px;font:400 23px/23px 'Liberation Sans',sans-serif;letter-spacing:0.263px;color:#718096;">success</span>
<span class="t r" style="left:916.50px;top:1117.73px;font:400 23px/23px 'Liberation Sans',sans-serif;letter-spacing:0.259px;color:#718096;">BashOperator</span>
<div class="a" style="left:900.3px;top:1211.45px;width:391.10px;height:136.80px;border-radius:9px;border:4px solid #377e22;background:#f4f1ea"></div>
<span class="t" style="left:916.50px;top:1223.12px;font:700 26.5px/26.5px 'Liberation Sans',sans-serif;letter-spacing:0.000px;color:#1a202c;transform-origin:0 0;transform:scaleX(0.9946);">runme_1</span>
<div class="a" style="left:915.9px;top:1261.75px;width:19.80px;height:19.40px;border-radius:4.5px;background:#377e22"></div>
<span class="t r" style="left:948.00px;top:1260.68px;font:400 23px/23px 'Liberation Sans',sans-serif;letter-spacing:0.263px;color:#718096;">success</span>
<span class="t r" style="left:916.50px;top:1293.68px;font:400 23px/23px 'Liberation Sans',sans-serif;letter-spacing:0.259px;color:#718096;">BashOperator</span>
<div class="a" style="left:900.3px;top:1387.4px;width:391.10px;height:136.80px;border-radius:9px;border:4px solid #377e22;background:#f4f1ea"></div>
<span class="t" style="left:916.50px;top:1399.07px;font:700 26.5px/26.5px 'Liberation Sans',sans-serif;letter-spacing:0.000px;color:#1a202c;transform-origin:0 0;transform:scaleX(1.0127);">runme_0</span>
<div class="a" style="left:915.9px;top:1437.7px;width:19.80px;height:19.40px;border-radius:4.5px;background:#377e22"></div>
<span class="t r" style="left:948.00px;top:1436.63px;font:400 23px/23px 'Liberation Sans',sans-serif;letter-spacing:0.263px;color:#718096;">success</span>
<span class="t r" style="left:916.50px;top:1469.63px;font:400 23px/23px 'Liberation Sans',sans-serif;letter-spacing:0.259px;color:#718096;">BashOperator</span>
<div class="a" style="left:1330.35px;top:1035.5px;width:391.10px;height:136.80px;border-radius:9px;border:4px solid #ed72b2;background:#f4f1ea"></div>
<span class="t" style="left:1346.55px;top:1047.17px;font:700 26.5px/26.5px 'Liberation Sans',sans-serif;letter-spacing:0.000px;color:#1a202c;transform-origin:0 0;transform:scaleX(0.9958);">this_will_skip</span>
<div class="a" style="left:1345.95px;top:1085.8px;width:19.80px;height:19.40px;border-radius:4.5px;background:#ed72b2"></div>
<span class="t r" style="left:1378.05px;top:1084.73px;font:400 23px/23px 'Liberation Sans',sans-serif;letter-spacing:0.533px;color:#718096;">skipped</span>
<span class="t r" style="left:1346.55px;top:1117.73px;font:400 23px/23px 'Liberation Sans',sans-serif;letter-spacing:0.245px;color:#718096;">BashOperator</span>
<div class="a" style="left:1330.35px;top:1211.45px;width:391.10px;height:136.80px;border-radius:9px;border:8px solid #377e22;background:#f4f1ea"></div>
<span class="t" style="left:1350.25px;top:1226.82px;font:700 26.5px/26.5px 'Liberation Sans',sans-serif;letter-spacing:0.000px;color:#1a202c;transform-origin:0 0;transform:scaleX(1.0121);">run_after_loop</span>
<div class="a" style="left:1349.65px;top:1265.45px;width:19.80px;height:19.40px;border-radius:4.5px;background:#377e22"></div>
<span class="t r" style="left:1381.75px;top:1264.38px;font:400 23px/23px 'Liberation Sans',sans-serif;letter-spacing:0.304px;color:#718096;">success</span>
<span class="t r" style="left:1350.25px;top:1297.38px;font:400 23px/23px 'Liberation Sans',sans-serif;letter-spacing:0.245px;color:#718096;">BashOperator</span>
<div class="a" style="left:1330.35px;top:1387.4px;width:391.10px;height:136.80px;border-radius:9px;border:4px solid #377e22;background:#f4f1ea"></div>
<span class="t" style="left:1346.55px;top:1399.07px;font:700 26.5px/26.5px 'Liberation Sans',sans-serif;letter-spacing:0.000px;color:#1a202c;transform-origin:0 0;transform:scaleX(0.9965);">also_run_this</span>
<div class="a" style="left:1345.95px;top:1437.7px;width:19.80px;height:19.40px;border-radius:4.5px;background:#377e22"></div>
<span class="t r" style="left:1378.05px;top:1436.63px;font:400 23px/23px 'Liberation Sans',sans-serif;letter-spacing:0.204px;color:#718096;">success</span>
<span class="t r" style="left:1346.55px;top:1469.63px;font:400 23px/23px 'Liberation Sans',sans-serif;letter-spacing:0.245px;color:#718096;">BashOperator</span>
<div class="a" style="left:1760.45px;top:1211.45px;width:391.10px;height:136.40px;border-radius:9px;border:4px solid #ed72b2;background:#f0f7ec"></div>
<span class="t" style="left:1776.65px;top:1223.12px;font:700 26.5px/26.5px 'Liberation Sans',sans-serif;letter-spacing:0.000px;color:#1a202c;transform-origin:0 0;transform:scaleX(0.9961);">run_this_last</span>
<div class="a" style="left:1776.0500000000002px;top:1261.75px;width:19.80px;height:19.40px;border-radius:4.5px;background:#ed72b2"></div>
<span class="t r" style="left:1808.15px;top:1260.68px;font:400 23px/23px 'Liberation Sans',sans-serif;letter-spacing:0.500px;color:#718096;">skipped</span>
<span class="t r" style="left:1776.65px;top:1293.68px;font:400 23px/23px 'Liberation Sans',sans-serif;letter-spacing:0.362px;color:#718096;">EmptyOperator</span>
<svg style="left:0;top:0" width="2212" height="1936" fill="none" stroke-linecap="round" stroke-linejoin="miter">
<path d="M1291.5 1104H1311V1245.8H1331.5" stroke="#5b97de" stroke-width="5.9"/>
<path d="M1291.5 1280H1331.5" stroke="#5b97de" stroke-width="5.9"/>
<path d="M1291.5 1455.7H1311V1313.9H1331.5" stroke="#5b97de" stroke-width="5.9"/>
<path d="M1721.5 1279.9H1761" stroke="#5b97de" stroke-width="5.9"/>
<path d="M1721 1104.3H1741V1245.9H1761" stroke="#a3afc1" stroke-width="3.9"/>
<path d="M1721 1455.8H1741V1314.3H1761" stroke="#a3afc1" stroke-width="3.9"/>
</svg>
<div class="a" style="left:851.9px;top:1673.7px;width:52.10px;height:214.40px;background:#eee;box-shadow:0 0 5px 1px rgba(0,0,0,.10)"></div>
<div class="a" style="left:851.9px;top:1673.7px;width:52.10px;height:52.40px;background:#fefefe"></div>
<div class="a" style="left:851.9px;top:1728.1px;width:52.10px;height:51.80px;background:#fefefe"></div>
<div class="a" style="left:851.9px;top:1782px;width:52.10px;height:51.90px;background:#fefefe"></div>
<div class="a" style="left:851.9px;top:1836px;width:52.10px;height:52.10px;background:#fefefe"></div>
<svg style="left:865.9px;top:1688px" width="24.10" height="23.80" viewBox="0 0 32 32" preserveAspectRatio="none"><path d="M32 18.133H18.133V32h-4.266V18.133H0v-4.266h13.867V0h4.266v13.867H32z" fill="#000"/></svg>
<div class="a" style="left:865.9px;top:1751.9px;width:24.10px;height:3.40px;background:#000"></div>
<svg style="left:865.9px;top:1797px" width="24.10" height="21.80" viewBox="0 0 32 29.54" preserveAspectRatio="none"><path d="M3.692 4.63c0-.53.4-.938.939-.938h5.215V0H4.708C2.13 0 0 2.054 0 4.63v5.216h3.692V4.631zM27.354 0h-5.2v3.692h5.17c.53 0 .984.4.984.939v5.215H32V4.631A4.624 4.624 0 0027.354 0zm.954 24.83c0 .532-.4.94-.939.94h-5.215v3.768h5.215c2.577 0 4.631-2.13 4.631-4.707v-5.139h-3.692v5.139zm-23.677.94c-.531 0-.939-.4-.939-.94v-5.138H0v5.139c0 2.577 2.13 4.707 4.708 4.707h5.138V25.77H4.631z" fill="#000"/></svg>
<svg style="left:868.9px;top:1853px" width="18.10" height="18.10" viewBox="3 3 18 18" preserveAspectRatio="none"><path d="M15 3l2.3 2.3-2.89 2.87 1.42 1.42L18.7 6.7 21 9V3h-6zM3 9l2.3-2.3 2.87 2.89 1.42-1.42L6.7 5.3 9 3H3v6zm6 12l-2.3-2.3 2.89-2.87-1.42-1.42L5.3 17.3 3 15v6h6zm12-6l-2.3 2.3-2.87-2.89-1.42 1.42 2.89 2.87L15 21h6v-6z" fill="#555"/></svg>
<div class="a" style="left:1768px;top:1589.9px;width:401.00px;height:299.80px;background:#f6f6f6"></div>
<div class="a" style="left:1803px;top:1599.3px;width:329.80px;height:281.30px;background:#fff"></div>
<div class="a" style="left:1822px;top:1667.9px;width:94.00px;height:32.90px;background:#8fb57f;border-radius:2.5px"></div>
<div class="a" style="left:1822px;top:1711px;width:94.00px;height:32.00px;background:#8fb57f;border-radius:2.5px"></div>
<div class="a" style="left:1822px;top:1753px;width:94.00px;height:32.90px;background:#8fb57f;border-radius:2.5px"></div>
<div class="a" style="left:1925px;top:1667.9px;width:93.90px;height:32.90px;background:#f4aed4;border-radius:2.5px"></div>
<div class="a" style="left:1925px;top:1753px;width:93.90px;height:32.90px;background:#8fb57f;border-radius:2.5px"></div>
<div class="a" style="left:2027.9px;top:1711px;width:94.10px;height:32.00px;background:#f4aed4;border-radius:2.5px"></div>
<div class="a" style="left:1921.4px;top:1706.9px;width:100.40px;height:39.70px;background:#8fb57f;border:6.3px solid #4a80cc;border-radius:6px"></div>
<div class="a" style="left:2085px;top:1883.5px;width:112.80px;height:31.50px;background:rgba(255,255,255,.6)"></div>
<span class="t r" style="left:2092.40px;top:1892.32px;font:400 19px/19px 'Liberation Sans',sans-serif;letter-spacing:0.386px;color:#8e8e8e;">React Flow</span>
</div>
</body></html>
